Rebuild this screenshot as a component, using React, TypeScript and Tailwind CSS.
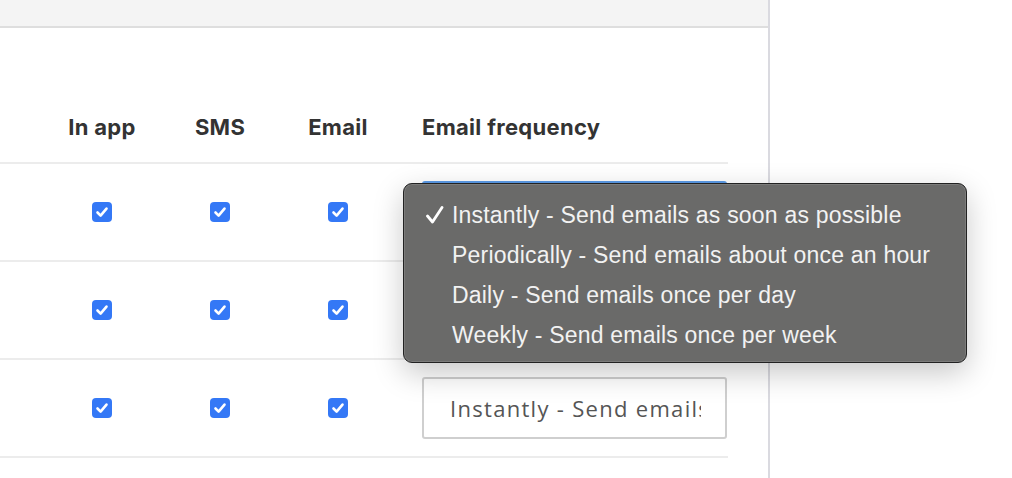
const rows = [0, 1, 2];

const options = [
  'Instantly - Send emails as soon as possible',
  'Periodically - Send emails about once an hour',
  'Daily - Send emails once per day',
  'Weekly - Send emails once per week',
];

const Checkbox = () => (
  <div className="w-[20px] h-[20px] rounded-[4px] bg-[#3478f6] flex items-center justify-center">
    <svg width="14" height="14" viewBox="0 0 14 14" fill="none">
      <path d="M2.5 7.5 L5.6 10.6 L11.5 3.6" stroke="white" strokeWidth="2.6" strokeLinecap="round" strokeLinejoin="round" />
    </svg>
  </div>
);

export default function App() {
  return (
    <div className="relative w-[1012px] h-[478px] overflow-hidden bg-white" style={{ fontFamily: 'Inter, "Open Sans", sans-serif' }}>
      <div className="flex h-full">
        <div className="w-[768px] h-full flex flex-col">
          <div className="h-[28px] bg-[#f4f4f4] border-b-2 border-[#dedede]" />

          <div className="pr-[40px]">
            {/* header */}
            <div className="grid grid-cols-[43px_118px_118px_118px_minmax(0,1fr)] items-end h-[136px] border-b-2 border-[#ececec] pb-[18px] text-[22px] font-bold tracking-[0.3px] text-[#333]">
              <div />
              <div className="text-center">In app</div>
              <div className="text-center">SMS</div>
              <div className="text-center">Email</div>
              <div className="pl-[25px] whitespace-nowrap">Email frequency</div>
            </div>

            {rows.map((r) => (
              <div key={r} className="grid grid-cols-[43px_118px_118px_118px_minmax(0,1fr)] items-center h-[98px] border-b-2 border-[#ececec]">
                <div />
                <div className="flex justify-center"><Checkbox /></div>
                <div className="flex justify-center"><Checkbox /></div>
                <div className="flex justify-center"><Checkbox /></div>
                <div className="pl-[25px] pr-[1px] min-w-0">
                  <div className={`h-[62px] rounded-[3px] border-2 flex items-center pl-[26px] pr-[24px] overflow-hidden min-w-0 ${r === 0 ? 'border-[#5b9ae6]' : 'border-[#cfcfcf]'}`}>
                    <span className="block whitespace-nowrap overflow-hidden text-[22px] text-[#555] tracking-[1.3px]" style={{ fontFamily: '"Open Sans", sans-serif' }}>
                      Instantly - Send emails as soon as possible
                    </span>
                  </div>
                </div>
              </div>
            ))}
          </div>
        </div>
        <div className="w-[2px] h-full bg-[#dadae0]" />
        <div className="flex-1" />
      </div>

      {/* open select menu */}
      <div className="absolute left-[403px] top-[183px] w-[564px] h-[180px] rounded-[9px] bg-[#6a6a69] border border-[#222] shadow-[0_10px_30px_rgba(0,0,0,0.22),inset_0_0_0_1px_rgba(255,255,255,0.12)] pt-[11px]" style={{ fontFamily: '"Liberation Sans", Arial, sans-serif' }}>
        {options.map((o, i) => (
          <div key={o} className="relative h-[40px] flex items-center pl-[48px] text-[23px] tracking-[0.2px] text-[#f2f2f2] whitespace-nowrap">
            {i === 0 && (
              <svg className="absolute left-[21px] top-[11px]" width="20" height="18" viewBox="0 0 20 18" fill="none">
                <path d="M2.5 10 L7.5 16 L17 1.5" stroke="white" strokeWidth="2.8" strokeLinecap="round" strokeLinejoin="round" />
              </svg>
            )}
            {o}
          </div>
        ))}
      </div>
    </div>
  );
}
